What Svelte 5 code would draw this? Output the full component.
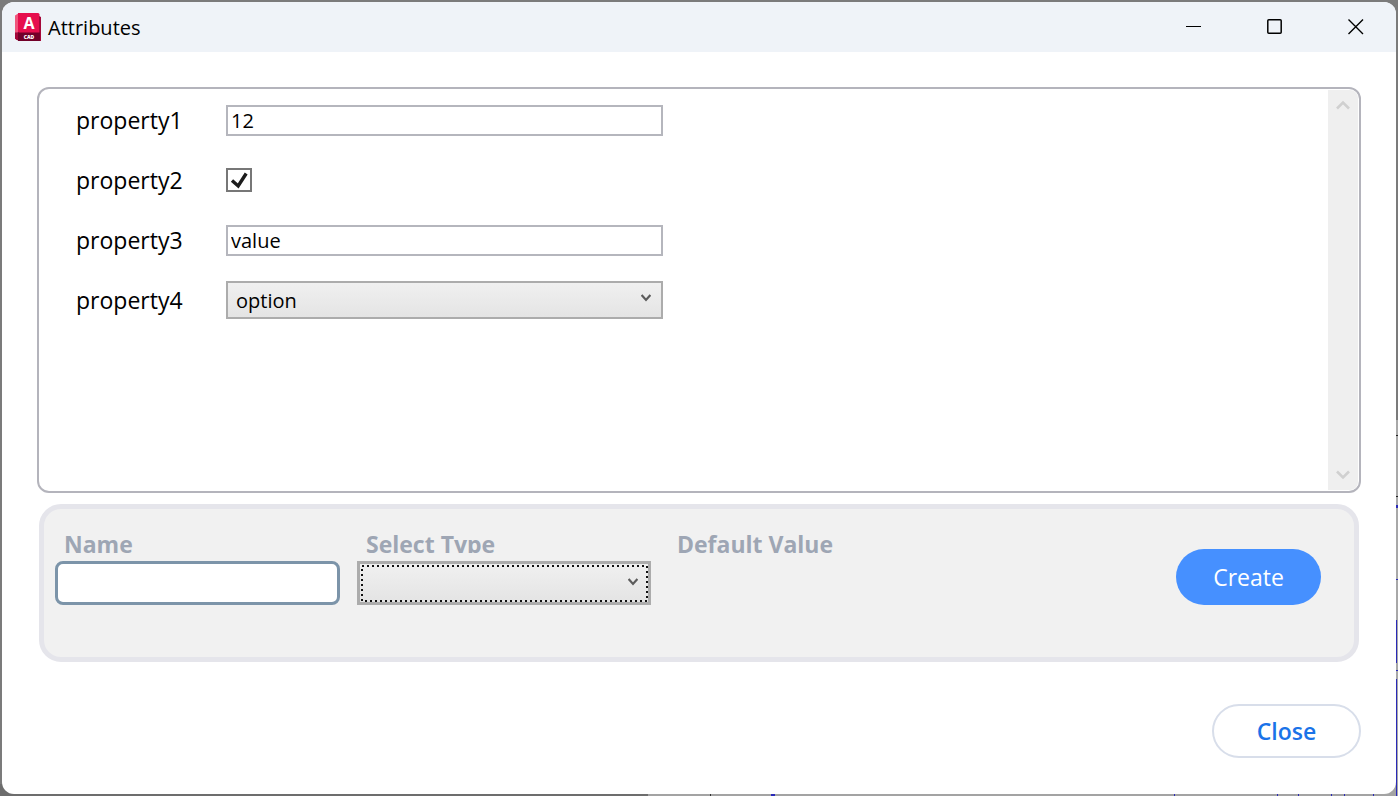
<script>
  let amount = $state('12');
  let enabled = $state(true);
  let text = $state('value');
  let choice = $state('option');
  let newName = $state('');
  let newType = $state('');
</script>

{#snippet chevron()}
  <svg class="chevron" viewBox="0 0 10 8" aria-hidden="true">
    <path d="M0.6 1 L5 5.900 L9.400 1" fill="none" stroke="#5c5c5c" stroke-width="2.2" />
  </svg>
{/snippet}

<div class="desktop">
  <div class="window">
    <header>
      <svg class="logo" viewBox="0 0 26 28" aria-hidden="true">
        <path d="M0 2.5 L4 0 V19 L0 20 Z" fill="#f0567c" />
        <path d="M3 0 H23 Q24.500 0 24.500 1.500 V20 H3 Z" fill="#e60f4d" />
        <path d="M24 3 L26 4 V28 H24 Z" fill="#a5093a" />
        <path d="M0 19.500 L4 19 V28 L1 26.500 L0 25.500 Z" fill="#a3083a" />
        <rect x="3" y="19.500" width="22" height="8.500" fill="#720029" />
        <text x="14" y="15.500" text-anchor="middle" font-size="16" font-weight="700" fill="#fff">A</text>
        <text x="14" y="25.500" text-anchor="middle" font-size="5" font-weight="800" fill="#fff">CAD</text>
      </svg>
      <h1>Attributes</h1>
      <div class="controls">
        <button aria-label="Minimize">
          <svg viewBox="0 0 16 16"><path d="M0 7.500 H15" stroke="#000" /></svg>
        </button>
        <button aria-label="Maximize">
          <svg viewBox="0 0 16 16"><rect x="0.800" y="0.800" width="13.400" height="13.400" rx="1" fill="none" stroke="#000" stroke-width="1.500" /></svg>
        </button>
        <button aria-label="Close window">
          <svg viewBox="0 0 16 16"><path d="M0.500 0.500 L15 15 M15 0.500 L0.500 15" stroke="#000" stroke-width="1.400" /></svg>
        </button>
      </div>
    </header>

    <main>
      <section class="panel">
        <div class="fields">
          <label for="p1">property1</label>
          <input id="p1" class="field" type="text" bind:value={amount} />
          <label for="p2">property2</label>
          <span class="check">
            <input id="p2" type="checkbox" bind:checked={enabled} />
            {#if enabled}
              <svg viewBox="0 0 24 24" aria-hidden="true"><path d="M5 12.500 L11.200 18 L19.200 5.500" fill="none" stroke="#1c1c1c" stroke-width="3.400" /></svg>
            {/if}
          </span>
          <label for="p3">property3</label>
          <input id="p3" class="field" type="text" bind:value={text} />
          <label for="p4">property4</label>
          <span class="combo">
            <select id="p4" bind:value={choice}>
              <option>option</option>
            </select>
            {@render chevron()}
          </span>
        </div>
        <div class="scrollbar">
          <button aria-label="Scroll up">
            <svg viewBox="0 0 14 10"><path d="M1 8.500 L7 2.500 L13 8.500" fill="none" stroke="#d0d0d0" stroke-width="2.600" /></svg>
          </button>
          <button aria-label="Scroll down">
            <svg viewBox="0 0 14 10"><path d="M1 1.500 L7 7.500 L13 1.500" fill="none" stroke="#d0d0d0" stroke-width="2.600" /></svg>
          </button>
        </div>
      </section>

      <section class="creator">
        <div class="group name">
          <label for="new-name">Name</label>
          <input id="new-name" type="text" bind:value={newName} />
        </div>
        <div class="group type">
          <label for="new-type">Select Type</label>
          <span class="combo focused">
            <select id="new-type" bind:value={newType}>
              <option value=""></option>
            </select>
            <svg class="focus" aria-hidden="true"><rect x="1" y="1" width="100%" height="100%" /></svg>
            {@render chevron()}
          </span>
        </div>
        <div class="group default"><span class="caption">Default Value</span></div>
        <button class="create">Create</button>
      </section>

      <footer><button class="close">Close</button></footer>
    </main>
  </div>
</div>

<style>
  :global(body) { margin: 0; }
  .desktop, .desktop * { box-sizing: border-box; }
  .desktop {
    min-height: 100vh;
    padding: 2px;
    display: flex;
    font-family: "Segoe UI", "Open Sans", "Noto Sans", sans-serif;
    color: #000;
    background:
      linear-gradient(#2a2ab8, #2a2ab8) right 0 top 505px / 2px 3px no-repeat,
      linear-gradient(#222, #222) right 0 top 435px / 2px 1px no-repeat,
      linear-gradient(#222, #222) right 0 top 496px / 2px 1px no-repeat,
      linear-gradient(#2a2ab8, #2a2ab8) right 0 top 579px / 2px 1px no-repeat,
      linear-gradient(#2a2ab8, #2a2ab8) right 1px top 620px / 1px 43px no-repeat,
      linear-gradient(#2a2ab8, #2a2ab8) right 0 top 670px / 2px 1px no-repeat,
      linear-gradient(#2a2ab8, #2a2ab8) right 1px top 679px / 1px 117px no-repeat,
      linear-gradient(90deg, transparent 710px, #333 710px 711px, transparent 711px 771px, #2a2ab8 771px 775px, transparent 775px 1174px, #2a2ab8 1174px 1175px, transparent 1175px 1277px, #2a2ab8 1277px 1278px, transparent 1278px 1298px, #2a2ab8 1298px 1299px, transparent 1299px 1331px, #2a2ab8 1331px 1332px, transparent 1332px 1344px, #2a2ab8 1344px 1345px, transparent 1345px 1373px, #2a2ab8 1373px 1374px, transparent 1374px) left bottom / 100% 2px no-repeat,
      linear-gradient(#a8a8a8, #a8a8a8) right 0 top 420px / 2px 376px no-repeat,
      linear-gradient(90deg, #6d6d6d 648px, #a3a3a3 648px) left bottom / 100% 12px no-repeat,
      #7b7b7b;
  }
  .window {
    flex: 1;
    display: flex;
    flex-direction: column;
    border-radius: 12px;
    overflow: hidden;
    background: #fff;
  }
  header {
    display: flex;
    align-items: center;
    height: 50px;
    padding-left: 13px;
    gap: 7px;
    background: #eff3f8;
  }
  .logo { width: 26px; height: 28px; }
  h1 { margin: 0; font-size: 20px; font-weight: 400; }
  .controls { display: flex; margin-left: auto; }
  button { font-family: inherit; cursor: pointer; }
  .controls button {
    display: grid;
    place-items: center;
    width: 81px;
    height: 50px;
    padding: 0;
    border: 0;
    background: none;
  }
  .controls svg { width: 16px; height: 16px; }
  main {
    flex: 1;
    display: flex;
    flex-direction: column;
    padding: 35px 35px 36px;
  }
  .panel {
    flex: 1;
    display: flex;
    min-height: 320px;
    padding: 1px 1px 1px 37px;
    border: 2px solid #b4b4bc;
    border-radius: 12px;
  }
  .fields {
    flex: 1;
    display: grid;
    grid-template-columns: 150px 437px;
    grid-auto-rows: 60px;
    align-items: center;
  }
  .fields label { font-size: 23px; line-height: 32px; }
  .field {
    height: 31px;
    padding: 0 3px;
    border: 2px solid #b5b6bd;
    font-family: inherit;
    font-size: 20px;
    color: #000;
    background: #fff;
  }
  .check { position: relative; width: 26px; height: 24px; }
  .check input {
    appearance: none;
    width: 26px;
    height: 24px;
    margin: 0;
    border: 2px solid #777;
    background: #fff;
  }
  .check svg { position: absolute; inset: 0; width: 26px; height: 24px; pointer-events: none; }
  .combo { position: relative; display: block; }
  select {
    appearance: none;
    display: block;
    width: 100%;
    height: 38px;
    padding: 0 28px 0 8px;
    border: 2px solid #acacac;
    border-radius: 0;
    background: linear-gradient(#f0f0f0, #e4e4e4);
    font-family: inherit;
    font-size: 20px;
    color: #000;
  }
  .chevron { position: absolute; right: 12px; top: 13px; width: 10px; height: 8px; pointer-events: none; }
  .scrollbar {
    display: flex;
    flex-direction: column;
    justify-content: space-between;
    width: 30px;
    border-radius: 0 8px 8px 0;
    background: #efefef;
  }
  .scrollbar button { height: 30px; padding: 0; border: 0; background: none; }
  .scrollbar svg { width: 14px; height: 10px; }
  .creator {
    display: flex;
    align-items: flex-start;
    height: 158px;
    margin: 11px 2px 42px;
    padding: 24px 33px 0 11px;
    gap: 17px;
    border: 5px solid #e5e5eb;
    border-radius: 22px;
    background: #f1f1f1;
  }
  .group { display: flex; flex-direction: column; gap: 8px; }
  .group label, .caption {
    height: 20px;
    padding-left: 9px;
    font-size: 23px;
    line-height: 22px;
    font-weight: 700;
    color: #9ea6b4;
  }
  .type label { overflow: hidden; }
  .name { width: 285px; }
  .name input {
    height: 44px;
    padding: 0 8px;
    border: 3px solid #7c94a9;
    border-radius: 8px;
    font-family: inherit;
    font-size: 20px;
    background: #fff;
  }
  .type { width: 294px; }
  .focused select { height: 44px; border-width: 3px; outline: none; }
  .focused .chevron { right: 13px; top: 17px; }
  .focus {
    position: absolute;
    left: 4px;
    top: 4px;
    width: calc(100% - 7px);
    height: 37px;
    pointer-events: none;
  }
  .focus rect {
    width: calc(100% - 2px);
    height: calc(100% - 2px);
    fill: none;
    stroke: #111;
    stroke-width: 2px;
    stroke-dasharray: 2 3;
  }
  .create {
    width: 145px;
    height: 56px;
    margin: 16px 0 0 auto;
    border: 0;
    border-radius: 28px;
    font-size: 23px;
    color: #fff;
    background: #4690ff;
  }
  footer { display: flex; justify-content: flex-end; }
  .close {
    width: 149px;
    height: 54px;
    border: 2px solid #d8deea;
    border-radius: 27px;
    font-size: 23px;
    font-weight: 600;
    color: #1a73e8;
    background: #fff;
  }
</style>
